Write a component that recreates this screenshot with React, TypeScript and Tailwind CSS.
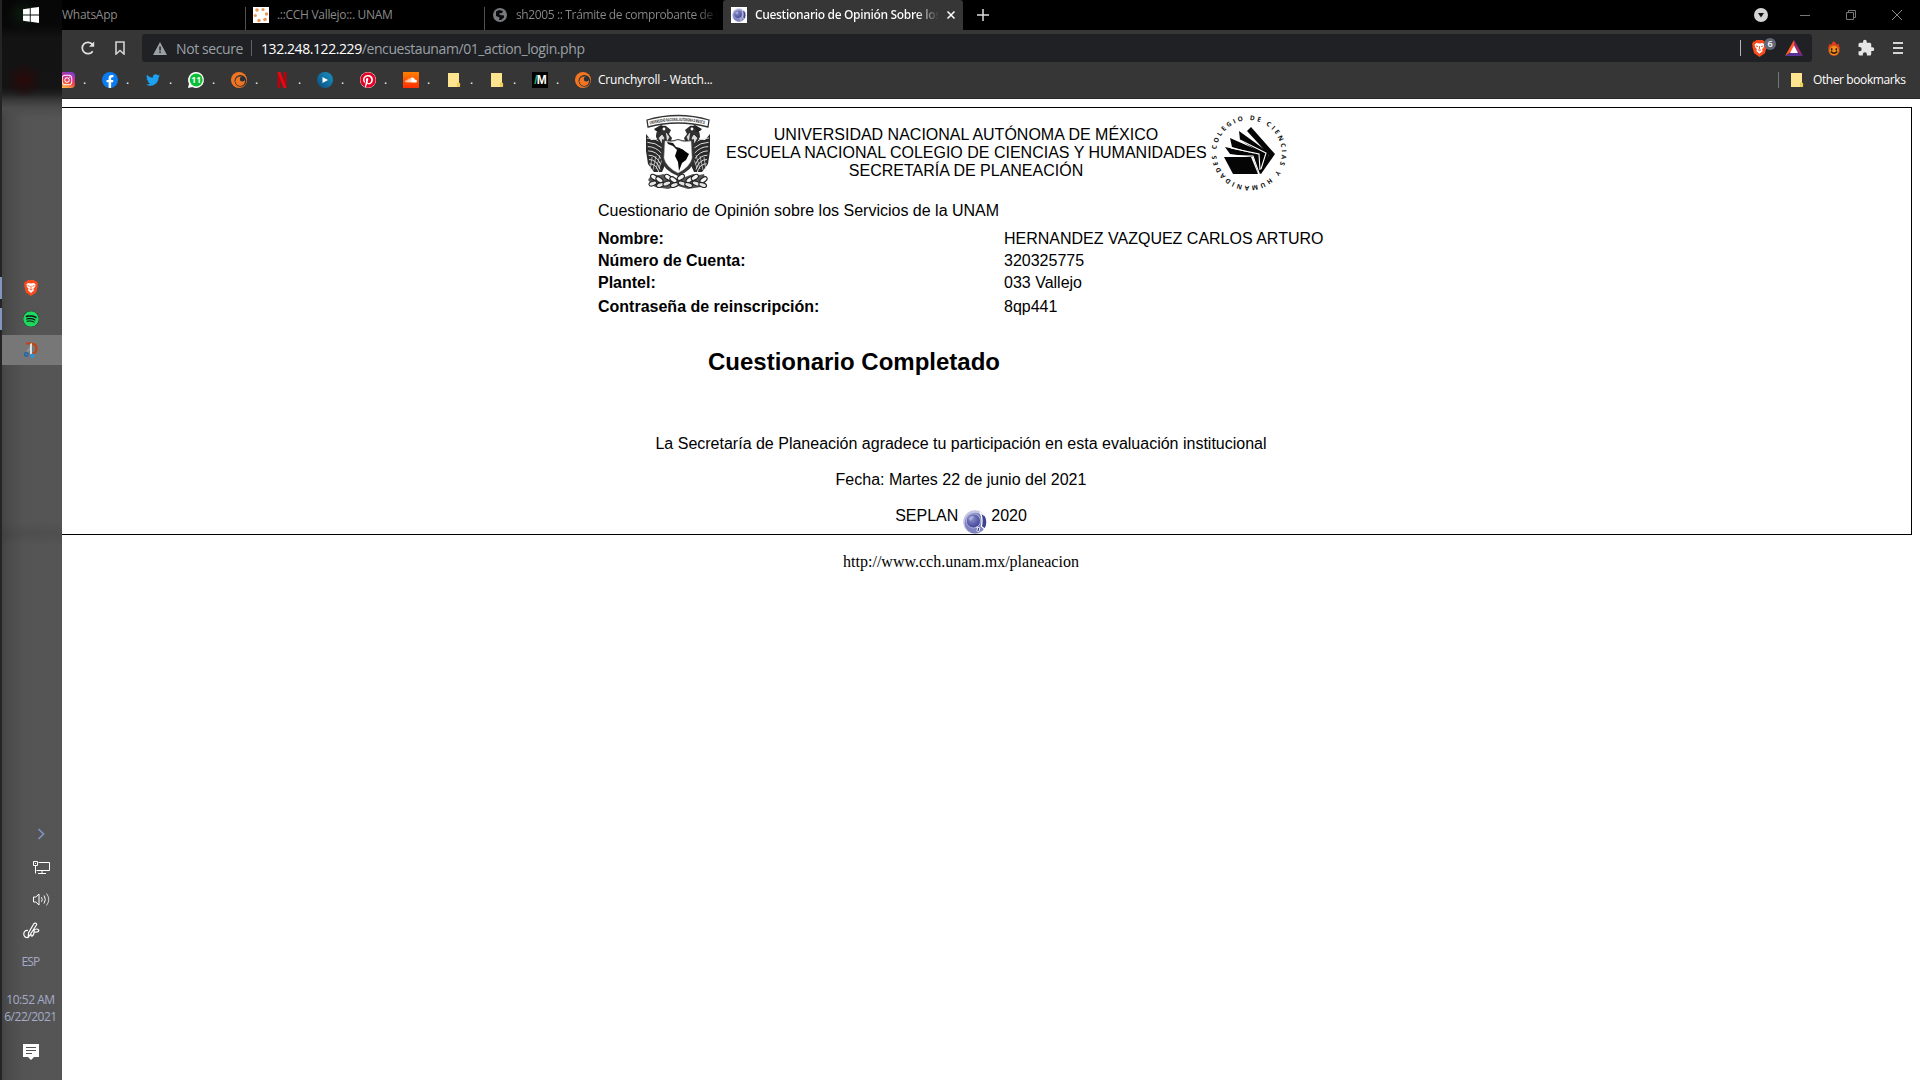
import React from "react";
import { FaFacebookF, FaTwitter, FaPinterest, FaSoundcloud, FaSpotify, FaInstagram } from "react-icons/fa";

const Crunchy = () => (
  <svg viewBox="0 0 16 16" className="h-4 w-4 shrink-0">
    <circle cx="8" cy="8" r="8" fill="#f47521" />
    <circle cx="9.4" cy="8.8" r="5.9" fill="#24303a" />
    <circle cx="9.2" cy="9.2" r="4.8" fill="#f47521" />
    <circle cx="11.4" cy="7" r="2.5" fill="#24303a" />
  </svg>
);

const Folder = () => (
  <svg viewBox="0 0 16 16" className="h-4 w-4">
    <path d="M2 1h11v10h1v4H2z" fill="#ffe48f" />
    <path d="M11.5 14.5v-3.5h2.3v3.5z" fill="#f7d55c" stroke="#d9b63c" strokeWidth=".5" />
  </svg>
);

const BraveLion = ({ className }: { className: string }) => (
  <svg viewBox="0 0 14 16" className={className}>
    <path d="M4 0h6l1.5 1.5L13 1.4 14 4l-.5 1.5.2.9-1.6 6L7 16l-5.1-3.6-1.6-6 .2-.9L0 4l1-2.6 1.5.1z" fill="#fb4a1b" />
    <path d="M2.4 4.5 4 2.9l3 .5 3-.5 1.6 1.6-.5 2.2-1.7 2 .6 1.6L7 13l-3-2.7.6-1.6-1.7-2z" fill="#fff" />
    <path d="m3.6 5.6 2 .6M10.4 5.6l-2 .6M7 5.8v3M5.6 9.2 7 10l1.4-.8" stroke="#fb4a1b" strokeWidth=".9" fill="none" />
  </svg>
);

const Seal = ({ className }: { className: string }) => (
  <svg viewBox="0 0 22 22" className={className}>
    <defs>
      <radialGradient id="orb" cx=".4" cy=".35" r=".75">
        <stop offset="0" stopColor="#8f93cc" />
        <stop offset=".6" stopColor="#555aa8" />
        <stop offset="1" stopColor="#383d90" />
      </radialGradient>
    </defs>
    <circle cx="11" cy="11" r="10.8" fill="#c3c5e2" />
    <circle cx="11" cy="12" r="9.5" fill="#7f83be" />
    <circle cx="9.500" cy="10" r="6.500" fill="url(#orb)" stroke="#b9bbdf" strokeWidth=".8" />
    <path d="M16 2.500 20.500 5.500c2 4 1.700 8.500-.5 12l-3.200-2.500c1-4 1-8-.8-12.500z" fill="#40448f" stroke="#fff" strokeWidth="1.100" />
    <path d="m12.500 15.500 3 1-1 3.500-2-1 1-1.500z" fill="#292d87" stroke="#fff" strokeWidth=".8" />
    <path d="M5 8c1-2 3-3 5-2L7 10z" fill="#c3c5e4" opacity=".6" />
  </svg>
);

const Play = () => (
  <svg viewBox="0 0 16 16" className="h-4 w-4">
    <defs><linearGradient id="pl" x1="0" y1="1" x2="1" y2="0"><stop offset="0" stopColor="#0a4c82" /><stop offset="1" stopColor="#1a95c4" /></linearGradient></defs>
    <circle cx="8" cy="8" r="8" fill="url(#pl)" />
    <path d="M5.500 5v6l5.500-3z" fill="#fff" />
  </svg>
);

const bookmarks: React.ReactNode[] = [
  <div className="flex h-4 w-4 items-center justify-center rounded-[4px] bg-[linear-gradient(20deg,#ffc94a_5%,#f0453c_40%,#c72d9c_65%,#6a48d8_100%)]"><FaInstagram className="h-3 w-3 text-white" /></div>,
  <div className="flex h-4 w-4 items-end justify-center overflow-hidden rounded-full bg-[#0a7cf0]"><FaFacebookF className="h-[13px] w-[10px] text-white" /></div>,
  <FaTwitter className="h-[14px] w-[14px] text-[#1da1f2]" />,
  <svg viewBox="0 0 16 16" className="h-4 w-4 overflow-visible">
    <path d="M8 0a8 8 0 1 1-3.700 15.100L0 16l1-4.200A8 8 0 0 1 8 0z" fill="#fff" />
    <circle cx="8.200" cy="7.900" r="6.500" fill="#0bbf35" />
    <text x="8.200" y="11" textAnchor="middle" fontSize="8.500" fontWeight="700" fill="#fff" className="font-['Open_Sans',sans-serif]">11</text>
  </svg>,
  <Crunchy />,
  <svg viewBox="0 0 16 16" className="h-4 w-4">
    <path d="M3.500 0h3v16h-3zM9.500 0h3v16h-3z" fill="#b1060f" /><path d="M3.500 0h3l6 16h-3z" fill="#e50914" />
  </svg>,
  <Play />,
  <div className="h-4 w-4 overflow-hidden rounded-full bg-white"><FaPinterest className="h-4 w-4 text-[#e60023]" /></div>,
  <div className="flex h-4 w-4 items-center justify-center bg-[linear-gradient(#ff8000,#ff2d00)]"><FaSoundcloud className="h-3 w-3 text-white" /></div>,
  <Folder />,
  <Folder />,
  <div className="flex h-4 w-4 items-center justify-center bg-black font-['Liberation_Sans',sans-serif] text-[12px] leading-none font-bold tracking-[-1px] text-white"><span className="text-[#29b35a]">/</span>M</div>,
];

const Shield = () => {
  const feathers = [0, 1, 2, 3, 4, 5, 6];
  const wing = (
    <g>
      <path d="M1 20 6 26l9-1 6 2v22l-4 9H9L3 50 1 37z" fill="#2b2b2b" />
      {feathers.map((i) => (
        <path key={i} d={`M${2 + i * 0.4} ${24 + i * 4.3}q8 0 ${16 - i} ${5 + i}`} stroke="#eee" strokeWidth=".9" fill="none" />
      ))}
      {feathers.slice(0, 4).map((i) => (
        <path key={i} d={`M${5 + i * 3} ${57 - i}l${2 + i}-14`} stroke="#ddd" strokeWidth=".7" fill="none" />
      ))}
      <path d="M11 23c0-7 4-12 10-11l5 4-2 4 3 4-3 8-6 3z" fill="#303030" />
      <path d="m9 15 7-4 5 2-6 2 1 3-5-1z" fill="#222" />
      <circle cx="19" cy="15" r="1.400" fill="#fff" />
      <path d="m14 24 3-3 2 3-2 5zM21 19l3 4-2 4" fill="#ddd" stroke="#eee" strokeWidth=".7" />
    </g>
  );
  return (
    <svg viewBox="0 0 66 77" className="h-[77px] w-[66px]">
      {wing}
      <g transform="translate(66 0) scale(-1 1)">{wing}</g>
      <path d="M2 6Q33-3 64 6l-1 7Q33 5 3 13z" fill="#fff" stroke="#333" strokeWidth="1.300" />
      <path id="scroll" d="M5 10.500Q33 3.500 61 10.500" fill="none" />
      <text fontSize="4.600" fontWeight="700" fill="#111" className="font-['Liberation_Sans',sans-serif]">
        <textPath href="#scroll" textLength="55" lengthAdjust="spacingAndGlyphs">UNIVERSIDAD NACIONAL AUTONOMA D MEXICO</textPath>
      </text>
      <path d="M17 25q6 3 16 0 10 3 16 0l1 20q-2 11-17 17-15-6-17-17z" fill="#333" />
      <path d="M20 27q7 2 13-1 6 3 13 1l1 17q-2 9-14 15-12-6-14-15z" fill="#fff" stroke="#bbb" strokeWidth=".5" />
      <path d="m22 28 6 1 3 4 4 1 4 3-2 1-5-2-4-4-5-2z" fill="#161616" />
      <path d="m32 36 5-1 4 3 3 2-3 6-4 3-3 8-1-9-3-6z" fill="#050505" />
      <path d="M7 60q8 2 11 0 7 3 15 5 8-2 15-5 4 2 11 0l2 7-5 6-13 2-10-3-10 3-13-2-7-7z" fill="#555" />
      {[8, 15, 22, 29, 37, 44, 51, 58].map((x, i) => (
        <g key={x}>
          <ellipse cx={x} cy={i % 2 ? 66 : 63} rx="4" ry="2.300" transform={`rotate(${i < 4 ? 35 : -35} ${x} 65)`} fill="#f5f5f5" stroke="#222" strokeWidth="1.100" />
          <ellipse cx={x} cy={i % 2 ? 71 : 69.500} rx="4" ry="2.200" transform={`rotate(${i < 4 ? -20 : 20} ${x} 70)`} fill="#e5e5e5" stroke="#222" strokeWidth="1.100" />
        </g>
      ))}
    </svg>
  );
};

const CchLogo = () => (
  <svg viewBox="0 0 76 76" className="h-[76px] w-[76px] overflow-visible">
    <path id="ring" d="M5.200 38a32.800 32.800 0 1 1 65.600 0a32.800 32.800 0 1 1-65.600 0" fill="none" transform="rotate(6 38 38)" />
    <text fontSize="6.500" fontWeight="700" fill="#111" className="font-['Open_Sans',sans-serif]">
      <textPath href="#ring" textLength="200" lengthAdjust="spacing">COLEGIO DE CIENCIAS Y HUMANIDADES</textPath>
    </text>
    <g fill="#050505">
      <path d="M13 42h27l7 17H22z" />
      <path d="m14 32 31 7 6 1-1 18-3-1-5-15-23-3z" />
      <path d="m19 23 32 14 3 2-3 18-2-1-1-16-27-8z" />
      <path d="m28 16 29 21 1 3-7 16-2 2 4-18-24-15z" />
      <path d="m40 12 24 27-14 20-2-1 10-18-22-24z" />
    </g>
    <path d="M14 40.500 42 41l6 17M20 33l28 6 1 16M29 25l26 13-5 16" fill="none" stroke="#fff" strokeWidth="1.100" />
  </svg>
);

const Divider = ({ className }: { className: string }) => <div className={`w-px shrink-0 ${className}`} />;

function Sidebar() {
  return (
    <aside className="relative flex h-[1080px] w-[62px] shrink-0 flex-col items-center bg-[linear-gradient(90deg,#424242_0,#4b4b4b_8px,#545454_24px,#555_100%)] font-['Open_Sans',sans-serif]">
      <div className="absolute inset-x-0 top-0 h-[118px] bg-[radial-gradient(circle_at_23px_14px,#0b1b0e_0,transparent_16px),radial-gradient(circle_at_24px_80px,#2b0808_0,transparent_18px),linear-gradient(#060606_0,#080808_26px,#131313_38px,#141414_88px,#202020_94px,#383838_100px,#4c4c4c_108px,#54545400_118px)]" />
      <div className="absolute inset-x-0 top-[522px] h-6 bg-[linear-gradient(transparent,#00000012,transparent)]" />
      <div className="absolute inset-y-0 left-0 w-[2px] bg-[#242424]" />
      <div className="absolute top-[277px] left-0 h-[22px] w-[2px] bg-[#8495bd]" />
      <div className="absolute top-[308px] left-0 h-[22px] w-[2px] bg-[#8495bd]" />
      <svg viewBox="0 0 16 16" className="relative mt-[7px] h-4 w-4"><path d="M0 2.200 6.800 1.200V7.500H0zM7.700 1.100 16 0v7.500H7.700zM0 8.400h6.800v6.300L0 13.700zM7.700 8.400H16V16l-8.300-1.200z" fill="#fff" /></svg>
      <BraveLion className="mt-[257px] h-4 w-[14px]" />
      <div className="mt-[15px] h-4 w-4 rounded-full bg-[#111]"><FaSpotify className="h-4 w-4 text-[#1ed760]" /></div>
      <div className="mt-2 flex h-[30px] w-full items-center justify-center border-l-2 border-[#8495bd] bg-[#777] pr-[2px]">
        <svg viewBox="0 0 16 16" className="h-4 w-4">
          <path d="M3 1.500h5c4 0 5.500 2.500 5.500 5 0 3.500-2.500 5.500-5 5.500" fill="none" stroke="#c8400f" strokeWidth="2.200" />
          <path d="M7 2 9 1v11H7z" fill="#dce1e6" /><path d="m7 4-4 6 4-1z" fill="#8f979e" />
          <circle cx="3.300" cy="12.500" r="1.700" fill="none" stroke="#1768b5" strokeWidth="1.400" />
          <circle cx="9.500" cy="13.700" r="1.500" fill="none" stroke="#1c9be8" strokeWidth="1.400" />
        </svg>
      </div>
      <svg viewBox="0 0 8 12" className="mt-[463px] ml-5 h-3 w-2"><path d="m1.500 1 5 5-5 5" fill="none" stroke="#7f92c0" strokeWidth="1.700" /></svg>
      <svg viewBox="0 0 17 14" className="mt-[21px] ml-5 h-[14px] w-[17px]" fill="none" stroke="#fff"><path d="M5.500 1.500h11v8h-13M.5.500h4v4h-4zM2.500 4.500v8M5 12.500h8M9 9.500v3M2 2.500h1" /></svg>
      <svg viewBox="0 0 17 15" className="mt-[17px] ml-5 h-[15px] w-[17px]" fill="none" stroke="#fff"><path d="M.5 5h2.300L6 2v11l-3.200-3H.5z" /><path d="M8.500 5.300q1.500 2.200 0 4.400M11 3.500q2.700 4 0 8" /><path d="M13.500 1.500q4.500 6 0 12" opacity=".75" /></svg>
      <svg viewBox="0 0 17 17" className="mt-[15px] h-[17px] w-[17px]" fill="none" stroke="#fff" strokeWidth="1.200"><path d="M5 8.500C2 8 .8 10 .8 12s1.500 4 4.400 3.500L13.500 3c.8-1.700-1.500-2.600-2.700-1.200L5.500 11l-.3 4.500M8 12c-.5 4 3 1.500 3-1.500V8.500c1-2 5-2 4.800.2-.3 1.800-2.800 1.500-4.800 1.300" /></svg>
      <div className="mt-[15px] pr-px text-[12px] leading-[16px] tracking-[-0.8px] text-[#a4abc8]">ESP</div>
      <div className="mt-[21px] w-[62px] pr-px text-center text-[12px] leading-[17px] tracking-[-0.48px] whitespace-nowrap text-[#a4abc8]">10:52 AM<br />6/22/2021</div>
      <svg viewBox="0 0 16 16" className="mt-[19px] h-4 w-4"><path d="M0 0h16v13h-5l-3 3-3-3H0z" fill="#fff" /><path d="M3 3.500h10M3 6.500h10M3 9.500h6" stroke="#555" /></svg>
    </aside>
  );
}

function TabBar() {
  return (
    <div className="flex h-[30px] items-center bg-black font-['Open_Sans',sans-serif] text-[12px] text-[#8a8a8a]">
      <div className="w-[183px] tracking-[-0.25px]">WhatsApp</div>
      <Divider className="mt-[7px] h-[23px] bg-[#505050]" />
      <div className="flex w-[238px] items-center pl-[7px]">
        <svg viewBox="0 0 16 16" className="h-4 w-4 bg-white" fill="#e79a5a"><circle cx="4" cy="3" r="1.800" /><circle cx="10" cy="2.500" r="1.600" /><circle cx="13.500" cy="7" r="1.700" /><circle cx="12" cy="12.500" r="1.800" /><circle cx="6" cy="13.500" r="1.700" /><circle cx="2.300" cy="8.500" r="1.600" /></svg>
        <span className="ml-2 tracking-[-0.3px] whitespace-nowrap">.::CCH Vallejo::. UNAM</span>
      </div>
      <Divider className="mt-[7px] h-[23px] bg-[#505050]" />
      <div className="flex w-[238px] items-center pl-2">
        <svg viewBox="0 0 14 14" className="h-[14px] w-[14px]"><circle cx="7" cy="7" r="7" fill="#77797c" /><path d="M3 3.500 6 2l4 1-1 2-3 .5 1 1.500 4 .5v2L8 12H6l.5-2.500L3 8z" fill="#08090a" /></svg>
        <span className="ml-[9px] w-[202px] bg-[linear-gradient(90deg,#8a8a8a_90%,transparent)] bg-clip-text tracking-[-0.37px] whitespace-nowrap text-transparent">sh2005 :: Trámite de comprobante de i</span>
      </div>
      <div className="flex h-full w-[240px] shrink-0 items-center rounded-t-[3px] bg-[#363636] pl-2 text-white">
        <div className="h-4 w-4 shrink-0 bg-white p-px"><Seal className="h-[14px] w-[14px]" /></div>
        <span className="ml-2 w-[184px] overflow-hidden bg-[linear-gradient(90deg,#fff_88%,transparent)] bg-clip-text font-semibold tracking-[-0.34px] whitespace-nowrap text-transparent">Cuestionario de Opinión Sobre los</span>
        <svg viewBox="0 0 8 8" className="ml-2 h-2 w-2"><path d="m.5.5 7 7m0-7-7 7" stroke="#fff" strokeWidth="1.500" /></svg>
      </div>
      <svg viewBox="0 0 12 12" className="ml-[14px] h-3 w-3"><path d="M0 6h12M6 0v12" stroke="#ddd" strokeWidth="1.500" /></svg>
      <div className="ml-auto flex items-center pr-[18px]">
        <svg viewBox="0 0 14 14" className="h-[14px] w-[14px]"><circle cx="7" cy="7" r="7" fill="#d5d5d5" /><path d="M4 5h6L7 9.500z" fill="#111" /></svg>
        <div className="ml-8 h-px w-[10px] bg-[#777]" />
        <svg viewBox="0 0 10 10" className="ml-9 h-[10px] w-[10px]" fill="none" stroke="#777"><path d="M.5 2.500h7v7h-7zM2.500 2.500v-2h7v7h-2" /></svg>
        <svg viewBox="0 0 10 10" className="ml-9 h-[10px] w-[10px]"><path d="m0 0 10 10M10 0 0 10" stroke="#888" /></svg>
      </div>
    </div>
  );
}

function AddressBar() {
  return (
    <div className="flex h-9 items-center pl-[19px] font-['Open_Sans',sans-serif] text-[14px] text-[#9aa0a6]">
      <svg viewBox="0 0 14 14" className="h-[14px] w-[14px]"><path d="M11.700 10.200a5.700 5.700 0 1 1-.3-6.800" fill="none" stroke="#e2e2e2" strokeWidth="1.700" /><path d="M13.200.5v5.300H8z" fill="#e2e2e2" /></svg>
      <svg viewBox="0 0 10 14" className="ml-5 h-[14px] w-[10px]"><path d="M1 1h8v12L5 9.500 1 13z" fill="none" stroke="#d2d2d2" strokeWidth="1.600" /></svg>
      <div className="ml-[17px] flex h-7 w-[1670px] items-center rounded-[3px] bg-[#202124] pl-[11px]">
        <svg viewBox="0 0 14 13" className="h-[13px] w-[14px]"><path d="M7 0l7 13H0z" fill="#9aa0a6" /><path d="M6.300 4.500h1.500v4H6.300zM6.300 9.500h1.500V11H6.300z" fill="#202124" /></svg>
        <span className="ml-[9px] w-[75px] tracking-[-0.4px] whitespace-nowrap">Not secure</span>
        <Divider className="h-4 bg-[#5f6368]" />
        <span className="ml-[9px] tracking-[-0.42px] whitespace-nowrap"><span className="text-white">132.248.122.229</span>/encuestaunam/01_action_login.php</span>
        <div className="ml-auto flex items-center pr-[9px]">
          <Divider className="h-4 bg-[#b5b5b5]" />
          <div className="relative ml-[11px]">
            <BraveLion className="h-[17px] w-[15px]" />
            <div className="absolute top-[-2px] left-3 flex h-3 w-3 items-center justify-center rounded-full bg-[#636877] text-[9px] font-semibold text-white">6</div>
          </div>
          <svg viewBox="0 0 18 16" className="ml-[18px] h-4 w-[18px]"><path d="M9 0 0 16l9-6z" fill="#ff5a2a" /><path d="m9 0 9 16-9-6z" fill="#a12a72" /><path d="M0 16h18l-9-5z" fill="#58349b" /><path d="m9 5.500 4 7.500H5z" fill="#fff" /></svg>
        </div>
      </div>
      <svg viewBox="0 0 14 16" className="ml-[15px] h-[15px] w-[14px]"><path d="M.5 8Q2 5 2 3l2 1q1-1 2-4 3 1 4 4l2-1q0 2 1.500 5z" fill="#e23a18" /><circle cx="7" cy="9.800" r="6" fill="#d9501a" /><circle cx="7" cy="10.300" r="4.900" fill="#f2921c" /><path d="M4.500 10V7.800M9.500 10V7.800M3.500 11.300q3.500 3.500 7 0" stroke="#2a1206" strokeWidth="1.600" fill="none" /></svg>
      <svg viewBox="0 0 24 24" className="ml-[16px] h-[18px] w-[18px]"><path d="M20.500 11H19V7a2 2 0 0 0-2-2h-4V3.500a2.500 2.500 0 0 0-5 0V5H4a2 2 0 0 0-2 2v3.800h1.500a2.700 2.700 0 0 1 0 5.400H2V20a2 2 0 0 0 2 2h3.800v-1.500a2.700 2.700 0 0 1 5.400 0V22H17a2 2 0 0 0 2-2v-4h1.500a2.500 2.500 0 0 0 0-5z" fill="#e6e6e6" /></svg>
      <svg viewBox="0 0 10 12" className="ml-[18px] h-3 w-[10px]"><path d="M0 1h10M0 6h10M0 11h10" stroke="#d5d5d5" strokeWidth="2" /></svg>
    </div>
  );
}

function BookmarkBar() {
  return (
    <div className="flex h-[33px] items-center overflow-hidden border-b border-[#292929] pb-1 font-['Open_Sans',sans-serif] text-[12px] text-white">
      <div className="-ml-[3px] flex">
        {bookmarks.map((icon, i) => (
          <div key={i} className="flex h-4 w-[43px] shrink-0 items-center">
            <div className="flex w-4 shrink-0 items-center justify-center">{icon}</div>
            <span className="ml-2 leading-4">.</span>
          </div>
        ))}
        <Crunchy />
        <span className="ml-[7px] leading-4 tracking-[-0.21px] whitespace-nowrap">Crunchyroll - Watch...</span>
      </div>
      <div className="ml-auto flex items-center pr-[14px]">
        <Divider className="h-4 bg-[#777]" />
        <div className="ml-[10px]"><Folder /></div>
        <span className="ml-2 w-[93px] tracking-[-0.4px] whitespace-nowrap">Other bookmarks</span>
      </div>
    </div>
  );
}

function SurveyPage() {
  return (
    <div className="flex-1 bg-white pt-2 text-black">
      <section className="h-[428px] w-[1850px] border border-l-0 border-black font-['Liberation_Sans',Arial,sans-serif] text-[16px] leading-[18px]">
        <header className="flex h-[92px] items-start pl-[583px]">
          <div className="mt-[6px]"><Shield /></div>
          <div className="mt-[18px] ml-[15px] w-[480px] text-center whitespace-nowrap">
            UNIVERSIDAD NACIONAL AUTÓNOMA DE MÉXICO<br />ESCUELA NACIONAL COLEGIO DE CIENCIAS Y HUMANIDADES<br />SECRETARÍA DE PLANEACIÓN
          </div>
          <div className="mt-[7px] ml-[5px]"><CchLogo /></div>
        </header>
        <div className="ml-[536px] w-[800px]">
          <p className="pt-[2px]">Cuestionario de Opinión sobre los Servicios de la UNAM</p>
          <dl className="mt-[10px] grid grid-cols-[406px_auto] gap-y-1">
            <dt className="font-bold">Nombre:</dt><dd>HERNANDEZ VAZQUEZ CARLOS ARTURO</dd>
            <dt className="font-bold">Número de Cuenta:</dt><dd>320325775</dd>
            <dt className="font-bold">Plantel:</dt><dd>033 Vallejo</dd>
            <dt className="mt-[2px] font-bold">Contraseña de reinscripción:</dt><dd className="mt-[2px]">8qp441</dd>
          </dl>
          <h1 className="mt-8 ml-[110px] text-[24px] leading-7 font-bold">Cuestionario Completado</h1>
        </div>
        <div className="mt-[59px] flex w-[1798px] flex-col items-center gap-[18px]">
          <p>La Secretaría de Planeación agradece tu participación en esta evaluación institucional</p>
          <p>Fecha: Martes 22 de junio del 2021</p>
          <div className="flex">SEPLAN<Seal className="mt-[3px] mr-1 ml-[5px] h-6 w-6" />2020</div>
        </div>
      </section>
      <p className="mt-[18px] w-[1798px] text-center font-['Liberation_Serif',serif] text-[16px] leading-[18px]">http://www.cch.unam.mx/planeacion</p>
    </div>
  );
}

export default function App() {
  return (
    <div className="flex h-[1080px] w-[1920px] overflow-hidden bg-white">
      <Sidebar />
      <main className="flex w-[1858px] flex-col">
        <div className="bg-[#363636]">
          <TabBar />
          <AddressBar />
          <BookmarkBar />
        </div>
        <SurveyPage />
      </main>
    </div>
  );
}
